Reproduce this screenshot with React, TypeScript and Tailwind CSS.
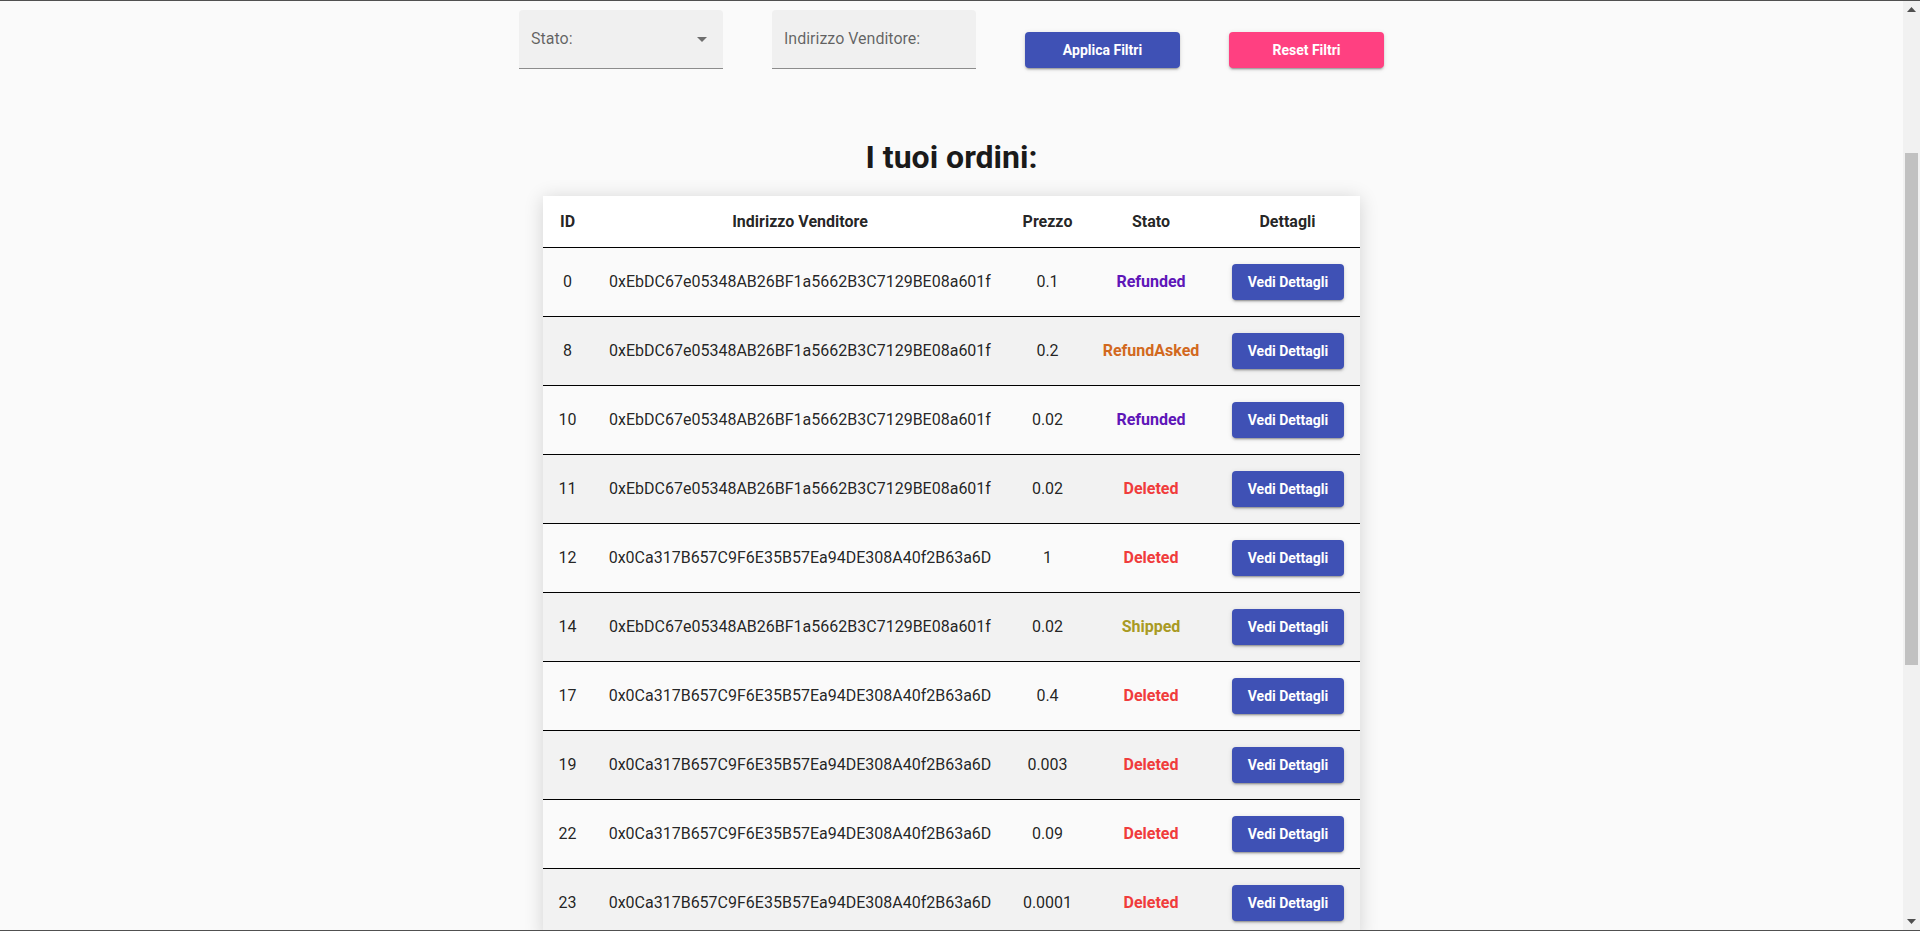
import React from "react";

const A1 = "0xEbDC67e05348AB26BF1a5662B3C7129BE08a601f";
const A2 = "0x0Ca317B657C9F6E35B57Ea94DE308A40f2B63a6D";

type Row = { id: number; addr: string; price: string; status: string };

const rows: Row[] = [
  { id: 0, addr: A1, price: "0.1", status: "Refunded" },
  { id: 8, addr: A1, price: "0.2", status: "RefundAsked" },
  { id: 10, addr: A1, price: "0.02", status: "Refunded" },
  { id: 11, addr: A1, price: "0.02", status: "Deleted" },
  { id: 12, addr: A2, price: "1", status: "Deleted" },
  { id: 14, addr: A1, price: "0.02", status: "Shipped" },
  { id: 17, addr: A2, price: "0.4", status: "Deleted" },
  { id: 19, addr: A2, price: "0.003", status: "Deleted" },
  { id: 22, addr: A2, price: "0.09", status: "Deleted" },
  { id: 23, addr: A2, price: "0.0001", status: "Deleted" },
];

function statusClass(s: string) {
  switch (s) {
    case "Refunded":
      return "text-[#5e16b8]";
    case "RefundAsked":
      return "text-[#d2691e]";
    case "Shipped":
      return "text-[#a99a24]";
    default:
      return "text-[#f03c3c]";
  }
}

const COLS = "grid grid-cols-[49px_416px_79px_128px_145px] items-center text-center";

const btnShadow =
  "shadow-[0_3px_1px_-2px_rgba(0,0,0,0.2),0_2px_2px_0_rgba(0,0,0,0.14),0_1px_5px_0_rgba(0,0,0,0.12)]";

function Scrollbar() {
  return (
    <div className="w-[17px] shrink-0 bg-[#f1f1f1] flex flex-col">
      <div className="h-[17px] flex items-center justify-center">
        <svg width="9" height="5" viewBox="0 0 9 5">
          <path d="M0 5h9L4.5 0z" fill="#505050" />
        </svg>
      </div>
      <div className="flex-1 px-[2px]">
        <div className="mt-[135px] h-[512px] bg-[#c1c1c1]" />
      </div>
      <div className="h-[17px] flex items-center justify-center">
        <svg width="9" height="5" viewBox="0 0 9 5">
          <path d="M0 0h9L4.5 5z" fill="#505050" />
        </svg>
      </div>
    </div>
  );
}

export default function App() {
  return (
    <div className="h-[931px] flex border-y border-[#505050] bg-[#fafafa] font-['Roboto',sans-serif] text-[rgba(0,0,0,0.87)]">
      <div className="flex-1 overflow-hidden pt-[9px]">
        <div className="flex justify-center items-end gap-[49px]">
          <div className="w-[204px] h-[59px] rounded-t-[4px] bg-[#f0f0f0] border-b border-[#8c8c8c] flex items-center justify-between pl-3 pr-[16px]">
            <span className="text-[16px] text-[rgba(0,0,0,0.6)]">Stato:</span>
            <svg width="10" height="5" viewBox="0 0 10 5" className="mt-[1px]">
              <path d="M0 0l5 5 5-5z" fill="rgba(0,0,0,0.54)" />
            </svg>
          </div>
          <div className="w-[204px] h-[59px] rounded-t-[4px] bg-[#f0f0f0] border-b border-[#8c8c8c] flex items-center pl-3">
            <span className="text-[16px] text-[rgba(0,0,0,0.6)]">Indirizzo Venditore:</span>
          </div>
          <button
            className={
              "w-[155px] h-[36px] mb-[1px] rounded-[4px] bg-[#3f51b5] text-white text-[14px] font-bold " +
              btnShadow
            }
          >
            Applica Filtri
          </button>
          <button
            className={
              "w-[155px] h-[36px] mb-[1px] rounded-[4px] bg-[#ff4081] text-white text-[14px] font-bold " +
              btnShadow
            }
          >
            Reset Filtri
          </button>
        </div>

        <h1 className="mt-[69px] text-center text-[32px] leading-[38px] font-bold text-[#1a1a1a]">
          I tuoi ordini:
        </h1>

        <div className="mt-[20px] mx-auto w-[817px] bg-white shadow-[0_2px_18px_rgba(0,0,0,0.16)]">
          <div className={COLS + " h-[52px] border-b border-black text-[16px] font-bold"}>
            <div>ID</div>
            <div>Indirizzo Venditore</div>
            <div>Prezzo</div>
            <div>Stato</div>
            <div>Dettagli</div>
          </div>
          {rows.map((r, i) => (
            <div
              key={r.id}
              className={
                COLS +
                " h-[69px] border-b border-black text-[16px] " +
                (i % 2 === 1 ? "bg-[#f2f2f2]" : "bg-[#fafafa]")
              }
            >
              <div>{r.id}</div>
              <div>{r.addr}</div>
              <div>{r.price}</div>
              <div className={"font-bold " + statusClass(r.status)}>{r.status}</div>
              <div className="flex justify-end pr-[16px]">
                <button
                  className={
                    "w-[112px] h-[36px] rounded-[4px] bg-[#3f51b5] text-white text-[14px] font-bold " +
                    btnShadow
                  }
                >
                  Vedi Dettagli
                </button>
              </div>
            </div>
          ))}
        </div>
      </div>
      <Scrollbar />
    </div>
  );
}
